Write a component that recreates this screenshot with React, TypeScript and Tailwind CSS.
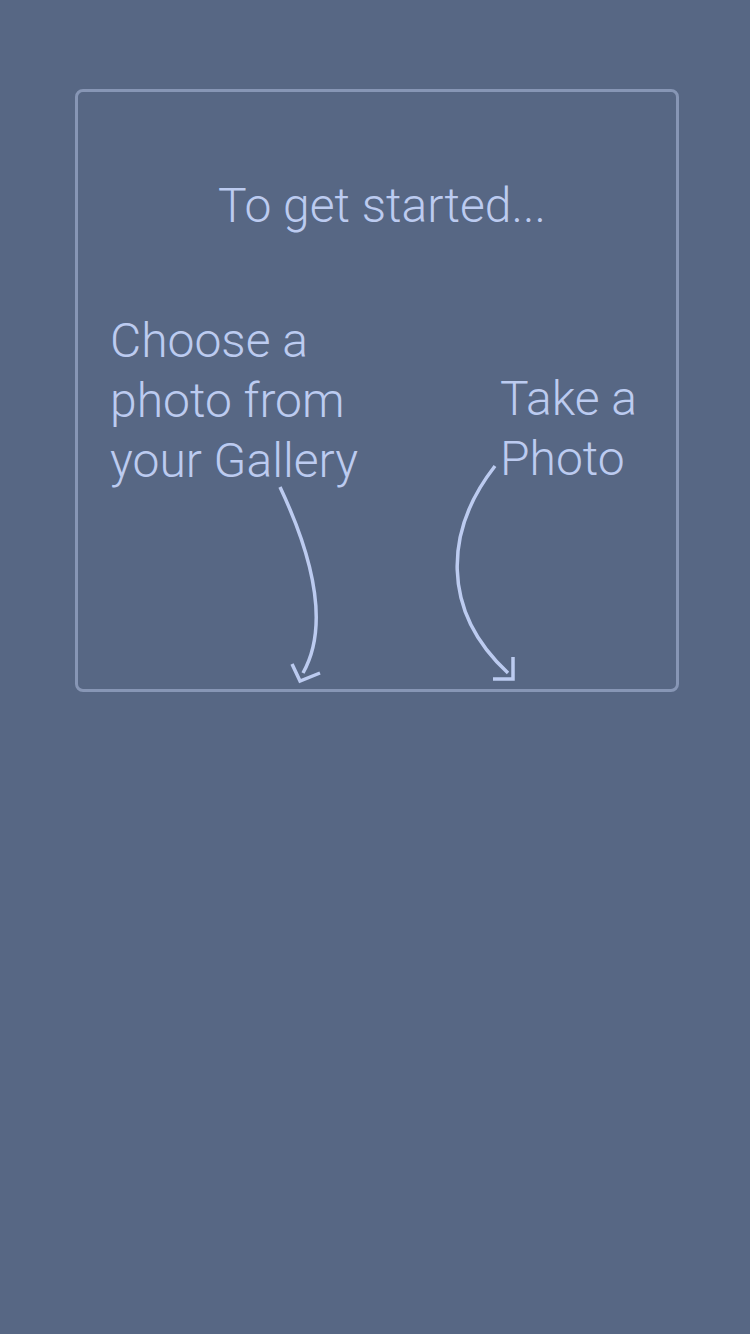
import React from "react";

export default function App() {
  return (
    <div
      className="w-[750px] h-[1334px] bg-[#576784] overflow-hidden pt-[89px] pl-[75px]"
      style={{ fontFamily: "Roboto, 'Liberation Sans', sans-serif" }}
    >
      <div className="relative w-[604px] h-[603px] border-[3px] border-[#8796b5] rounded-[8px] text-[#bccbf0] font-light">
        <div className="pt-[84px] text-center text-[48px] leading-[60px] pl-[10px]">
          To get started...
        </div>
        <div className="flex mt-[75px] pl-[32px] text-[48px] leading-[60px]">
          <div className="w-[390px]">
            Choose a
            <br />
            photo from
            <br />
            your Gallery
          </div>
          <div className="mt-[58px]">
            Take a
            <br />
            Photo
          </div>
        </div>
        <svg
          className="absolute left-[-78px] top-[-92px] pointer-events-none"
          width="750"
          height="800"
          viewBox="0 0 750 800"
          fill="none"
          stroke="#bccbf0"
          strokeWidth="3.5"
        >
          <path d="M280 487 C 312 555, 330 625, 303 673" />
          <path d="M292 664 L300 681 L320 673" />
          <path d="M495 466 C 445 530, 440 610, 508 673" />
          <path d="M513 657 L513 679 L493 679" />
        </svg>
      </div>
    </div>
  );
}
